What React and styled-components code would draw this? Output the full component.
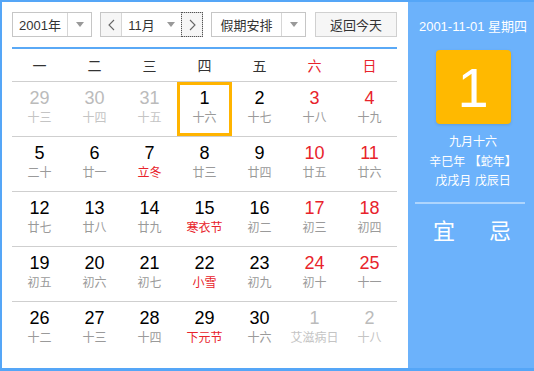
import styled, { createGlobalStyle } from 'styled-components';

const GlobalStyle = createGlobalStyle`
  html, body { margin: 0; padding: 0; background: #fff; }
  body { font-family: "Liberation Sans", "Noto Sans CJK SC", sans-serif; }
`;

const FONT = `"Liberation Sans", "Noto Sans CJK SC", sans-serif`;

const Frame = styled.div`
  width: 534px;
  height: 371px;
  box-sizing: border-box;
  background: #55a6f7;
  padding: 2px 0 3px 2px;
  display: flex;
  font-family: ${FONT};
`;

const Main = styled.div`
  width: 406px;
  background: #fff;
  box-sizing: border-box;
  padding: 10px 11px 0 10px;
  display: flex;
  flex-direction: column;
`;

const Toolbar = styled.div`
  display: flex;
  align-items: center;
  height: 25px;
  gap: 8px;
`;

const Select = styled.div`
  display: flex;
  height: 25px;
  width: ${(p) => p.$w}px;
  box-sizing: border-box;
  border: 1px solid #c6c6c6;
  background: #fff;
  font-size: 13px;
  color: #333;
`;

const SelectLabel = styled.div`
  flex: 1;
  display: flex;
  align-items: center;
  justify-content: center;
`;

const Caret = styled.div`
  width: 23px;
  border-left: 1px solid #d6d6d6;
  display: flex;
  align-items: center;
  justify-content: center;
  &::after {
    content: '';
    border-left: 4px solid transparent;
    border-right: 4px solid transparent;
    border-top: 5px solid #999;
  }
`;

const MonthGroup = styled.div`
  display: flex;
  height: 25px;
  box-sizing: border-box;
  border: 1px solid #c6c6c6;
  font-size: 13px;
  color: #333;
`;

const NavBtn = styled.div`
  width: ${(p) => (p.$focus ? 20 : 21)}px;
  background: #f6f6f6;
  display: flex;
  align-items: center;
  justify-content: center;
  box-sizing: border-box;
  border-right: ${(p) => (p.$left ? '1px solid #d6d6d6' : 'none')};
  outline: ${(p) => (p.$focus ? '1px dotted #555' : 'none')};
  outline-offset: 0;
`;

const MonthSelect = styled.div`
  width: 59px;
  display: flex;
  border-right: 1px solid #d6d6d6;
`;

const MonthCaret = styled(Caret)`
  width: 20px;
  border-left: none;
`;

const TodayBtn = styled.div`
  margin-left: 1px;
  width: 82px;
  height: 25px;
  box-sizing: border-box;
  border: 1px solid #d0d0d0;
  background: #f6f6f6;
  font-size: 13px;
  color: #333;
  display: flex;
  align-items: center;
  justify-content: center;
`;

const Rule = styled.div`
  margin-top: 10px;
  height: 2px;
  background: #5aa9f6;
`;

const WeekRow = styled.div`
  display: grid;
  grid-template-columns: repeat(7, 55px);
  height: 32px;
  align-items: center;
`;

const WeekDay = styled.div`
  text-align: center;
  font-size: 14px;
  color: ${(p) => (p.$red ? '#e8232b' : '#333')};
`;

const Row = styled.div`
  display: grid;
  grid-template-columns: repeat(7, 55px);
  height: 55px;
  box-sizing: border-box;
  border-top: 1px solid #cfcfcf;
`;

const Cell = styled.div`
  box-sizing: border-box;
  display: flex;
  flex-direction: column;
  align-items: center;
  padding-top: ${(p) => (p.$sel ? 1 : 4)}px;
  border: ${(p) => (p.$sel ? '3px solid #ffb400' : 'none')};
`;

const Day = styled.div`
  font-size: 18px;
  line-height: 24px;
  color: ${(p) => (p.$off ? '#bbb' : p.$red ? '#e8232b' : '#000')};
`;

const Lunar = styled.div`
  font-size: 12px;
  line-height: 16px;
  color: ${(p) => (p.$off ? '#c4c4c4' : p.$fest ? '#e8232b' : '#9a9a9a')};
  white-space: nowrap;
`;

const Side = styled.div`
  flex: 1;
  background: #6cb2fb;
  color: #fff;
  display: flex;
  flex-direction: column;
  align-items: center;
  padding-left: 4px;
  box-sizing: border-box;
`;

const SideDate = styled.div`
  margin-top: 16px;
  font-size: 13px;
  line-height: 18px;
`;

const BigDay = styled.div`
  margin-top: 14px;
  width: 75px;
  height: 74px;
  border-radius: 4px;
  background: #ffb900;
  box-shadow: 0 1px 3px rgba(0, 0, 0, 0.12);
  display: flex;
  align-items: center;
  justify-content: center;
  font-size: 56px;
  font-weight: 300;
`;

const Info = styled.div`
  margin-top: 9px;
  display: flex;
  flex-direction: column;
  align-items: center;
`;

const InfoLine = styled.div`
  font-size: 12px;
  line-height: 19.5px;
`;

const SideRule = styled.div`
  margin-top: 10px;
  width: 110px;
  height: 2px;
  background: rgba(255, 255, 255, 0.45);
  margin-left: -6px;
`;

const YiJi = styled.div`
  margin-top: 14px;
  display: flex;
  gap: 34px;
  font-size: 22px;
  line-height: 28px;
  margin-left: -2px;
`;

const Chevron = ({ dir }) => (
  <svg width="7" height="12" viewBox="0 0 7 12">
    <path
      d={dir === 'left' ? 'M6 1 L1 6 L6 11' : 'M1 1 L6 6 L1 11'}
      fill="none"
      stroke="#666"
      strokeWidth="1.1"
    />
  </svg>
);

const weeks = [
  [['29', '十三', 'off'], ['30', '十四', 'off'], ['31', '十五', 'off'], ['1', '十六', 'sel'], ['2', '十七'], ['3', '十八'], ['4', '十九']],
  [['5', '二十'], ['6', '廿一'], ['7', '立冬', 'fest'], ['8', '廿三'], ['9', '廿四'], ['10', '廿五'], ['11', '廿六']],
  [['12', '廿七'], ['13', '廿八'], ['14', '廿九'], ['15', '寒衣节', 'fest'], ['16', '初二'], ['17', '初三'], ['18', '初四']],
  [['19', '初五'], ['20', '初六'], ['21', '初七'], ['22', '小雪', 'fest'], ['23', '初九'], ['24', '初十'], ['25', '十一']],
  [['26', '十二'], ['27', '十三'], ['28', '十四'], ['29', '下元节', 'fest'], ['30', '十六'], ['1', '艾滋病日', 'off'], ['2', '十八', 'off']],
];

const weekNames = ['一', '二', '三', '四', '五', '六', '日'];

export default function App() {
  return (
    <>
      <GlobalStyle />
      <Frame>
        <Main>
          <Toolbar>
            <Select $w={80}>
              <SelectLabel>2001年</SelectLabel>
              <Caret />
            </Select>
            <MonthGroup>
              <NavBtn $left>
                <Chevron dir="left" />
              </NavBtn>
              <MonthSelect>
                <SelectLabel>11月</SelectLabel>
                <MonthCaret />
              </MonthSelect>
              <NavBtn $focus>
                <Chevron dir="right" />
              </NavBtn>
            </MonthGroup>
            <Select $w={95}>
              <SelectLabel>假期安排</SelectLabel>
              <Caret />
            </Select>
            <TodayBtn>返回今天</TodayBtn>
          </Toolbar>
          <Rule />
          <WeekRow>
            {weekNames.map((w, i) => (
              <WeekDay key={w} $red={i >= 5}>{w}</WeekDay>
            ))}
          </WeekRow>
          {weeks.map((week, r) => (
            <Row key={r}>
              {week.map(([d, l, kind], c) => (
                <Cell key={c} $sel={kind === 'sel'}>
                  <Day $off={kind === 'off'} $red={c >= 5}>{d}</Day>
                  <Lunar $off={kind === 'off'} $fest={kind === 'fest'}>{l}</Lunar>
                </Cell>
              ))}
            </Row>
          ))}
        </Main>
        <Side>
          <SideDate>2001-11-01 星期四</SideDate>
          <BigDay>1</BigDay>
          <Info>
            <InfoLine>九月十六</InfoLine>
            <InfoLine>辛巳年 【蛇年】</InfoLine>
            <InfoLine>戊戌月 戊辰日</InfoLine>
          </Info>
          <SideRule />
          <YiJi>
            <span>宜</span>
            <span>忌</span>
          </YiJi>
        </Side>
      </Frame>
    </>
  );
}
